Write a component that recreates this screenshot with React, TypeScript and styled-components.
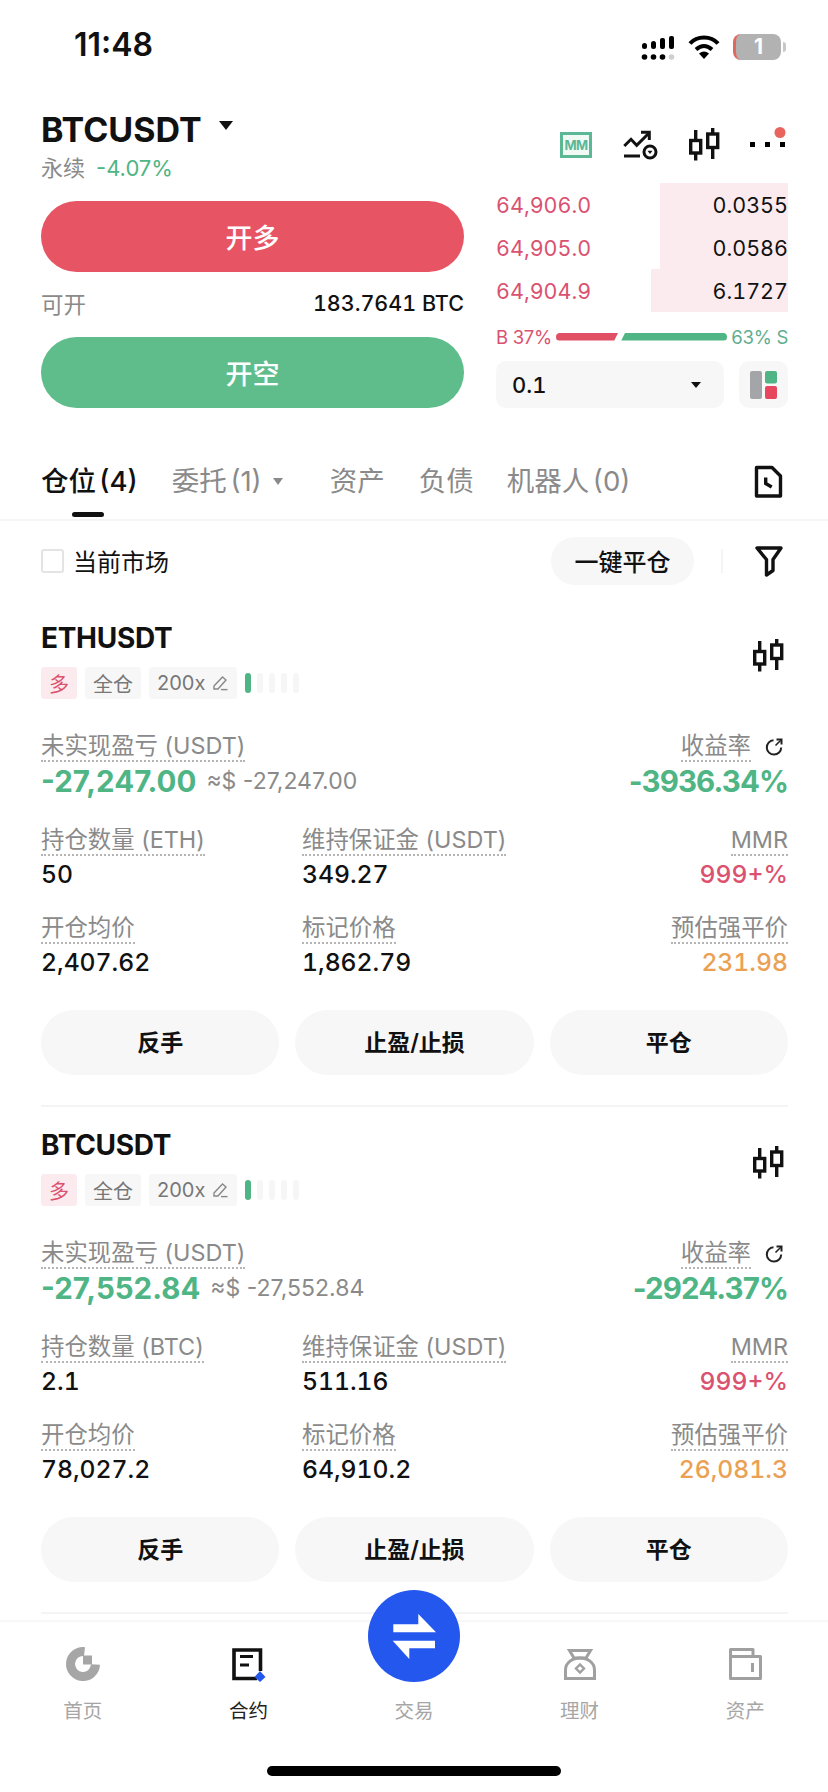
import React from 'react';
import styled, {createGlobalStyle} from 'styled-components';

const GlobalStyle = createGlobalStyle`
	html, body {
		margin: 0;
		padding: 0;
		background: #FFF;
	}
	* {
		box-sizing: border-box;
	}
	body {
		font-family: Inter, "Noto Sans CJK SC", sans-serif;
		color: #111;
	}
`;

const RED = '#DB5170';
const GREEN = '#4FB585';
const GRAY = '#8A8A8A';

const Page = styled.div`
	position: relative;
	width: 828px;
	height: 1792px;
	display: flex;
	flex-direction: column;
	overflow: hidden;
	background: #FFF;
`;

const StatusBar = styled.div`
	height: 109px;
	padding: 29px 47px 0 74px;
	display: flex;
	align-items: flex-start;
	justify-content: space-between;
`;

const Clock = styled.span`
	font-size: 32px;
	line-height: 32px;
	font-weight: 600;
`;

const StatusIcons = styled.div`
	display: flex;
	align-items: center;
	margin-top: 4px;
	gap: 13px;
`;

const Battery = styled.div`
	position: relative;
	width: 48px;
	height: 26px;
	border-radius: 8px;
	border-left: 3px solid #E0685E;
	background: #B2B2B2;
	color: #FFF;
	font-size: 21px;
	line-height: 26px;
	font-weight: 700;
	text-align: center;
	&::after {
		content: '';
		position: absolute;
		right: -5px;
		top: 8px;
		width: 3px;
		height: 10px;
		border-radius: 0 3px 3px 0;
		background: #C8C8C8;
	}
`;

const Header = styled.header`
	display: flex;
	gap: 32px;
	padding: 0 40px 0 41px;
`;

const LeftColumn = styled.div`
	width: 423px;
`;

const RightColumn = styled.div`
	width: 292px;
`;

const Symbol = styled.div`
	display: flex;
	align-items: center;
	height: 40px;
	font-size: 34px;
	font-weight: 700;
`;

const Caret = styled.i<{$size: number; $color?: string}>`
	display: inline-block;
	width: 0;
	height: 0;
	border-left: ${p => p.$size}px solid transparent;
	border-right: ${p => p.$size}px solid transparent;
	border-top: ${p => p.$size * 1.35}px solid ${p => p.$color || '#111'};
`;

const SymbolCaret = styled(Caret)`
	margin: 0 0 8px 17px;
`;

const SubLine = styled.div`
	margin-top: 4px;
	height: 30px;
	line-height: 30px;
	font-size: 22px;
	color: ${GRAY};
	> b {
		font-weight: 400;
		color: ${GREEN};
		margin-left: 11px;
	}
`;

const OpenButton = styled.button<{$color: string}>`
	display: block;
	width: 100%;
	height: 71px;
	border: 0;
	border-radius: 36px;
	padding: 0;
	background: ${p => p.$color};
	color: #FFF;
	font-family: inherit;
	font-size: 27px;
	font-weight: 500;
`;

const LongButton = styled(OpenButton)`
	margin-top: 18px;
`;

const Available = styled.div`
	height: 65px;
	padding-bottom: 3px;
	display: flex;
	align-items: center;
	justify-content: space-between;
	font-size: 21.5px;
	font-weight: 500;
	font-variant-numeric: tabular-nums;
	> span {
		font-size: 22.5px;
		font-weight: 400;
		color: ${GRAY};
	}
`;

const Toolbar = styled.div`
	height: 74px;
	padding-top: 18px;
	display: flex;
	align-items: flex-start;
	justify-content: flex-end;
	gap: 30px;
	> :last-child {
		margin-left: -2px;
	}
`;

const MMBadge = styled.div`
	width: 32px;
	height: 26px;
	margin-top: 5px;
	border: 3px solid #5CB795;
	background: #F1F9F5;
	color: #5CB795;
	font-size: 13px;
	line-height: 20px;
	font-weight: 700;
	text-align: center;
	letter-spacing: -0.6px;
`;

const BookRow = styled.div`
	position: relative;
	height: 43px;
	display: flex;
	align-items: center;
	justify-content: space-between;
	font-size: 21.5px;
	font-variant-numeric: tabular-nums;
	> span {
		color: ${RED};
	}
`;

const DepthBar = styled.div`
	position: absolute;
	top: 0;
	bottom: 0;
	right: 0;
	background: #FBEBEE;
`;

const Quantity = styled.div`
	position: relative;
	color: #111;
`;

const Ratio = styled.div`
	height: 49px;
	display: flex;
	align-items: center;
	font-size: 18.5px;
	letter-spacing: -0.3px;
`;

const RatioLabel = styled.span<{$color: string}>`
	color: ${p => p.$color};
	white-space: nowrap;
`;

const RatioTrack = styled.div`
	flex: 1;
	display: flex;
	gap: 3px;
	margin: 0 4px;
`;

const RatioBuy = styled.div`
	height: 8px;
	border-radius: 4px 0 0 4px;
	background: #E04F63;
	clip-path: polygon(0 0, 100% 0, calc(100% - 4px) 100%, 0 100%);
`;

const RatioSell = styled.div`
	height: 8px;
	border-radius: 0 4px 4px 0;
	background: #4FB585;
	clip-path: polygon(4px 0, 100% 0, 100% 100%, 0 100%);
`;

const SizeRow = styled.div`
	display: flex;
	justify-content: space-between;
`;

const SizeSelect = styled.div`
	width: 228px;
	height: 47px;
	padding: 0 23px 0 16px;
	border-radius: 10px;
	background: #F7F7F7;
	display: flex;
	align-items: center;
	justify-content: space-between;
	font-size: 22px;
	font-weight: 500;
	font-variant-numeric: tabular-nums;
`;

const LayoutButton = styled.div`
	width: 49px;
	height: 47px;
	border-radius: 10px;
	background: #F7F7F7;
	display: flex;
	align-items: center;
	justify-content: center;
`;

const Tabs = styled.nav`
	position: relative;
	margin-top: 55px;
	height: 58px;
	padding: 0 45px 0 41px;
	display: flex;
	align-items: flex-start;
	border-bottom: 2px solid #F5F5F5;
`;

const Tab = styled.div<{$active?: boolean; $gap: number}>`
	position: relative;
	height: 36px;
	margin-right: ${p => p.$gap}px;
	display: flex;
	align-items: center;
	font-size: 27.5px;
	line-height: 36px;
	word-spacing: -4px;
	font-weight: ${p => p.$active ? 500 : 400};
	color: ${p => p.$active ? '#111' : GRAY};
	${p => p.$active && `
		&::after {
			content: '';
			position: absolute;
			left: 31px;
			top: 49px;
			width: 32px;
			height: 5px;
			border-radius: 3px;
			background: #111;
		}
	`}
`;

const TabCaret = styled(Caret)`
	margin-left: 11px;
`;

const TabEnd = styled.div`
	margin-left: auto;
	margin-top: 1px;
`;

const FilterRow = styled.div`
	padding: 16px 44px 0 41px;
	display: flex;
	align-items: center;
`;

const CheckBox = styled.div`
	width: 23px;
	height: 24px;
	border: 2px solid #E4E4E4;
	border-radius: 3px;
`;

const CheckLabel = styled.span`
	margin: 0 0 2px 9px;
	font-size: 24px;
`;

const ClosePill = styled.div`
	margin-left: auto;
	width: 143px;
	height: 48px;
	padding-bottom: 2px;
	border-radius: 24px;
	background: #F7F7F7;
	display: flex;
	align-items: center;
	justify-content: center;
	font-size: 24px;
	font-weight: 500;
`;

const FilterSplit = styled.div`
	width: 2px;
	height: 24px;
	margin: 0 31px 0 27px;
	background: #F4F4F4;
`;

const Positions = styled.main`
	flex: 1;
	min-height: 0;
	overflow: hidden;
	padding-top: 15px;
`;

const Card = styled.section`
	margin: 0 40px 0 41px;
	padding: 18px 0 30px;
	border-bottom: 2px solid #F4F4F4;
`;

const CardHead = styled.div`
	display: flex;
	justify-content: space-between;
	align-items: flex-start;
	> svg {
		margin: 20px 4px 0 0;
	}
`;

const CardTitle = styled.h2`
	margin: 0 0 9px;
	height: 40px;
	line-height: 40px;
	font-size: 28px;
	font-weight: 700;
	letter-spacing: -0.3px;
`;

const TagRow = styled.div`
	display: flex;
	align-items: center;
	gap: 8px;
`;

const Tag = styled.span<{$long?: boolean}>`
	height: 32px;
	padding: 0 8px;
	border-radius: 3px;
	display: inline-flex;
	align-items: center;
	gap: 7px;
	font-size: 20px;
	background: ${p => p.$long ? '#FBEBEE' : '#F7F7F7'};
	color: ${p => p.$long ? RED : '#777'};
`;

const Leverage = styled.div`
	display: flex;
	gap: 6px;
`;

const LeverageBar = styled.i<{$on?: boolean}>`
	width: 6px;
	height: 20px;
	border-radius: 3px;
	background: ${p => p.$on ? GREEN : '#F6F6F6'};
`;

const Metrics = styled.div`
	margin-top: 33px;
	display: flex;
	flex-direction: column;
	gap: 24px;
`;

const PnlRow = styled.div`
	height: 70px;
	display: flex;
	justify-content: space-between;
`;

const MetricRow = styled.div`
	display: grid;
	grid-template-columns: 261px 1fr auto;
`;

const Metric = styled.div<{$right?: boolean}>`
	display: flex;
	flex-direction: column;
	align-items: ${p => p.$right ? 'flex-end' : 'flex-start'};
`;

const LabelLine = styled.div`
	display: flex;
	align-items: center;
	gap: 13px;
	padding-right: 4px;
`;

const Label = styled.span`
	height: 30px;
	line-height: 28px;
	font-size: 23.4px;
	color: ${GRAY};
	border-bottom: 2px dotted #B5B5B5;
	white-space: nowrap;
`;

const Value = styled.div<{$color?: string}>`
	margin-top: 2px;
	height: 32px;
	line-height: 32px;
	font-size: 24.7px;
	font-weight: 500;
	font-variant-numeric: tabular-nums;
	color: ${p => p.$color || '#111'};
`;

const BigLine = styled.div`
	margin-top: 2px;
	height: 34px;
	display: flex;
	align-items: center;
	gap: 10px;
`;

const BigValue = styled.span<{$color: string; $tight?: boolean}>`
	font-size: 29.5px;
	line-height: 34px;
	font-weight: 700;
	letter-spacing: ${p => p.$tight ? -0.9 : 0}px;
	color: ${p => p.$color};
`;

const Approx = styled.span`
	font-size: 23px;
	color: ${GRAY};
`;

const Actions = styled.div`
	margin-top: 32px;
	display: grid;
	grid-template-columns: repeat(3, 1fr);
	gap: 16px;
`;

const ActionButton = styled.button`
	height: 65px;
	border: 0;
	border-radius: 33px;
	padding: 0 0 3px;
	background: #F7F7F7;
	color: #111;
	font-family: inherit;
	font-size: 23px;
	font-weight: 600;
`;

const TabBar = styled.footer`
	position: relative;
	height: 172px;
	border-top: 2px solid #F8F8F8;
	background: #FFF;
	display: grid;
	grid-template-columns: repeat(5, 1fr);
`;

const BarItem = styled.div<{$active?: boolean}>`
	position: relative;
	padding-top: 24px;
	display: flex;
	flex-direction: column;
	align-items: center;
	gap: 14px;
	font-size: 19.5px;
	line-height: 30px;
	color: ${p => p.$active ? '#222' : '#A6A6A6'};
	> svg {
		display: block;
	}
`;

const IconSlot = styled.div`
	height: 36px;
`;

const TradeButton = styled.div`
	position: absolute;
	top: -32px;
	left: 50%;
	width: 92px;
	height: 92px;
	margin-left: -46px;
	border-radius: 50%;
	background: #2457EE;
`;

const HomeBar = styled.div`
	position: absolute;
	left: 267px;
	bottom: 16px;
	width: 294px;
	height: 10px;
	border-radius: 5px;
	background: #000;
`;

const SignalIcon = () => (
	<svg width="36" height="28" viewBox="0 0 36 28">
		<rect x="3" y="10" width="5" height="6" rx="2.5"/>
		<rect x="12" y="8" width="5" height="8" rx="2.5"/>
		<rect x="21" y="5" width="5" height="11" rx="2"/>
		<rect x="30" y="3" width="5" height="13" rx="2"/>
		<circle cx="5.5" cy="24" r="2.8"/>
		<circle cx="14.5" cy="24" r="2.8"/>
		<circle cx="23.5" cy="24" r="2.8"/>
		<circle cx="32.5" cy="24" r="2.8" fill="#CFCFCF"/>
	</svg>
);

const WifiIcon = () => (
	<svg width="32" height="26" viewBox="0 0 32 26">
		<path d="M2 9.5C9 1.5 23 1.5 30 9.5" fill="none" stroke="#000" strokeWidth="4"/>
		<path d="M8 15.5Q16 8.5 24 15.5" fill="none" stroke="#000" strokeWidth="4"/>
		<path d="M11 19.5Q16 15.5 21 19.5L16 25Z"/>
	</svg>
);

const ChartIcon = () => (
	<svg width="36" height="34" viewBox="0 0 36 34" fill="none" stroke="#111" strokeWidth="3">
		<path d="M2.3 19L9 12.3L14.7 18.3L26.3 6.7"/>
		<path d="M19 5.2H27.3V13"/>
		<path d="M2 29H18"/>
		<circle cx="28" cy="25" r="6"/>
		<path d="M25.5 23.8H30.5L28 27Z" fill="#111" stroke="none"/>
	</svg>
);

const CandleIcon = () => (
	<svg width="32" height="34" viewBox="0 0 32 34" fill="none" stroke="#111" strokeWidth="3.4">
		<path d="M7.7 3V33.5"/>
		<rect x="2.7" y="13.5" width="10" height="12.5" fill="#FFF"/>
		<path d="M24.7 1V32"/>
		<rect x="19.7" y="7" width="10" height="13.5" fill="#FFF"/>
	</svg>
);

const MoreIcon = () => (
	<svg width="40" height="34" viewBox="2 0 40 34">
		<rect x="4" y="15" width="5" height="5"/>
		<rect x="19" y="15" width="5" height="5"/>
		<rect x="34" y="15" width="5" height="5"/>
		<circle cx="34" cy="5.5" r="5.5" fill="#E9645F"/>
	</svg>
);

const LayoutIcon = () => (
	<svg width="27" height="28" viewBox="0 0 27 28">
		<rect width="12" height="28" rx="2" fill="#A3A5A9"/>
		<rect x="15" width="12" height="12.5" rx="2" fill="#4FB585"/>
		<rect x="15" y="15" width="12" height="13" rx="2" fill="#E6465E"/>
	</svg>
);

const HistoryIcon = () => (
	<svg width="30" height="34" viewBox="0 0 30 34" fill="none" stroke="#111" strokeWidth="3.4">
		<path d="M3.5 3.5H19L27.5 12V32H3.5Z" strokeLinejoin="round"/>
		<path d="M12.7 13.5V19.5L18.7 23"/>
	</svg>
);

const FilterIcon = () => (
	<svg width="30" height="32" viewBox="0 0 30 32" fill="none" stroke="#111" strokeWidth="3.4" strokeLinejoin="round">
		<path d="M3 3H27L19 14.5V25.5L12.5 30V14.5Z"/>
	</svg>
);

const PenIcon = () => (
	<svg width="17" height="16" viewBox="0 0 17 16" fill="none" stroke="#888" strokeWidth="1.4">
		<path d="M2 11L10.5 2L14 5L6 14H2Z"/>
		<path d="M9 14.6H15.5"/>
	</svg>
);

const RefreshIcon = () => (
	<svg width="20" height="20" viewBox="0 0 20 20" fill="none" stroke="#222" strokeWidth="2">
		<path d="M9.5 3.2A7.2 7.2 0 1 0 17.2 10.5"/>
		<path d="M12.5 2.6H17.5V7.6"/>
		<path d="M17.3 2.8L11.5 8.5" strokeWidth="1.6"/>
	</svg>
);

const HomeIcon = () => (
	<svg width="36" height="36" viewBox="0 0 36 36" fill="none">
		<path d="M19.5 5.6A12.5 12.5 0 1 0 30.5 18.5" stroke="#A6A6A6" strokeWidth="9"/>
		<rect x="18" y="9.5" width="9" height="9" fill="#A6A6A6"/>
	</svg>
);

const ContractIcon = () => (
	<svg width="36" height="36" viewBox="0 0 36 36" fill="none">
		<path d="M27 32.5H4V4H30.5V25" stroke="#111" strokeWidth="3.6"/>
		<path d="M10 10.5H23M10 19H19" stroke="#111" strokeWidth="3.2"/>
		<path d="M30 25L35.5 31L30 36L24.5 31Z" fill="#2457EE"/>
	</svg>
);

const FinanceIcon = () => (
	<svg width="36" height="36" viewBox="0 0 36 36" fill="none" stroke="#A0A0A0" strokeWidth="3">
		<path d="M7.5 4.5H28.5L24 12H12Z"/>
		<path d="M3.5 32.5V24C3.5 17 10 12 18 12S32.5 17 32.5 24V32.5Z"/>
		<path d="M18 18.5L22 22.5L18 26.5L14 22.5Z" strokeWidth="2.4"/>
	</svg>
);

const AssetIcon = () => (
	<svg width="36" height="36" viewBox="0 0 36 36" fill="none" stroke="#A0A0A0" strokeWidth="3">
		<path d="M3.5 3.5H26V10.5H33.5V32.5H3.5Z" strokeLinejoin="round"/>
		<path d="M3.5 10.5H26"/>
		<path d="M25.5 17V26"/>
	</svg>
);

const SwapIcon = () => (
	<svg width="92" height="92" viewBox="0 0 92 92" fill="#FFF">
		<path d="M25.3 34.3H50.3V24L68 42.3H25.3Z"/>
		<path d="M67 50.7H24.7L41.3 69V58.3H67Z"/>
	</svg>
);

type Position = {
	symbol: string;
	base: string;
	pnl: string;
	approx: string;
	roi: string;
	size: string;
	margin: string;
	entry: string;
	mark: string;
	liq: string;
};

const positions: Position[] = [
	{symbol: 'ETHUSDT', base: 'ETH', pnl: '-27,247.00', approx: '≈$ -27,247.00', roi: '-3936.34%', size: '50', margin: '349.27', entry: '2,407.62', mark: '1,862.79', liq: '231.98'},
	{symbol: 'BTCUSDT', base: 'BTC', pnl: '-27,552.84', approx: '≈$ -27,552.84', roi: '-2924.37%', size: '2.1', margin: '511.16', entry: '78,027.2', mark: '64,910.2', liq: '26,081.3'},
];

const book = [
	{price: '64,906.0', qty: '0.0355', depth: 128},
	{price: '64,905.0', qty: '0.0586', depth: 128},
	{price: '64,904.9', qty: '6.1727', depth: 137},
];

const barItems = [
	{label: '首页', icon: <HomeIcon/>},
	{label: '合约', icon: <ContractIcon/>, active: true},
	{label: '交易'},
	{label: '理财', icon: <FinanceIcon/>},
	{label: '资产', icon: <AssetIcon/>},
];

const PositionCard = ({item}: {item: Position}) => (
	<Card>
		<CardHead>
			<div>
				<CardTitle>{item.symbol}</CardTitle>
				<TagRow>
					<Tag $long>多</Tag>
					<Tag>全仓</Tag>
					<Tag>200x <PenIcon/></Tag>
					<Leverage>
						<LeverageBar $on/>
						<LeverageBar/>
						<LeverageBar/>
						<LeverageBar/>
						<LeverageBar/>
					</Leverage>
				</TagRow>
			</div>
			<CandleIcon/>
		</CardHead>
		<Metrics>
			<PnlRow>
				<Metric>
					<Label>未实现盈亏 (USDT)</Label>
					<BigLine>
						<BigValue $color={GREEN}>{item.pnl}</BigValue>
						<Approx>{item.approx}</Approx>
					</BigLine>
				</Metric>
				<Metric $right>
					<LabelLine>
						<Label>收益率</Label>
						<RefreshIcon/>
					</LabelLine>
					<BigLine>
						<BigValue $color={GREEN} $tight>{item.roi}</BigValue>
					</BigLine>
				</Metric>
			</PnlRow>
			<MetricRow>
				<Metric>
					<Label>持仓数量 ({item.base})</Label>
					<Value>{item.size}</Value>
				</Metric>
				<Metric>
					<Label>维持保证金 (USDT)</Label>
					<Value>{item.margin}</Value>
				</Metric>
				<Metric $right>
					<Label>MMR</Label>
					<Value $color={RED}>999+%</Value>
				</Metric>
			</MetricRow>
			<MetricRow>
				<Metric>
					<Label>开仓均价</Label>
					<Value>{item.entry}</Value>
				</Metric>
				<Metric>
					<Label>标记价格</Label>
					<Value>{item.mark}</Value>
				</Metric>
				<Metric $right>
					<Label>预估强平价</Label>
					<Value $color="#EBA154">{item.liq}</Value>
				</Metric>
			</MetricRow>
		</Metrics>
		<Actions>
			<ActionButton>反手</ActionButton>
			<ActionButton>止盈/止损</ActionButton>
			<ActionButton>平仓</ActionButton>
		</Actions>
	</Card>
);

export default function App() {
	return (
		<Page>
			<GlobalStyle/>
			<StatusBar>
				<Clock>11:48</Clock>
				<StatusIcons>
					<SignalIcon/>
					<WifiIcon/>
					<Battery>1</Battery>
				</StatusIcons>
			</StatusBar>
			<Header>
				<LeftColumn>
					<Symbol>BTCUSDT<SymbolCaret $size={7}/></Symbol>
					<SubLine>永续<b>-4.07%</b></SubLine>
					<LongButton $color="#E75565">开多</LongButton>
					<Available><span>可开</span>183.7641 BTC</Available>
					<OpenButton $color="#5FBD8C">开空</OpenButton>
				</LeftColumn>
				<RightColumn>
					<Toolbar>
						<MMBadge>MM</MMBadge>
						<ChartIcon/>
						<CandleIcon/>
						<MoreIcon/>
					</Toolbar>
					{book.map(row =>
						<BookRow key={row.price}>
							<DepthBar style={{width: row.depth}}/>
							<span>{row.price}</span>
							<Quantity>{row.qty}</Quantity>
						</BookRow>)}
					<Ratio>
						<RatioLabel $color={RED}>B 37%</RatioLabel>
						<RatioTrack>
							<RatioBuy style={{flex: 37}}/>
							<RatioSell style={{flex: 63}}/>
						</RatioTrack>
						<RatioLabel $color="#5FAE90">63% S</RatioLabel>
					</Ratio>
					<SizeRow>
						<SizeSelect>0.1<Caret $size={5}/></SizeSelect>
						<LayoutButton><LayoutIcon/></LayoutButton>
					</SizeRow>
				</RightColumn>
			</Header>
			<Tabs>
				<Tab $active $gap={34}>仓位 (4)</Tab>
				<Tab $gap={47}>委托 (1)<TabCaret $size={5.5} $color={GRAY}/></Tab>
				<Tab $gap={34}>资产</Tab>
				<Tab $gap={33}>负债</Tab>
				<Tab $gap={0}>机器人 (0)</Tab>
				<TabEnd><HistoryIcon/></TabEnd>
			</Tabs>
			<FilterRow>
				<CheckBox/>
				<CheckLabel>当前市场</CheckLabel>
				<ClosePill>一键平仓</ClosePill>
				<FilterSplit/>
				<FilterIcon/>
			</FilterRow>
			<Positions>
				{positions.map(item => <PositionCard key={item.symbol} item={item}/>)}
			</Positions>
			<TabBar>
				{barItems.map(item =>
					<BarItem key={item.label} $active={item.active}>
						{item.icon
							? item.icon
							: <IconSlot><TradeButton><SwapIcon/></TradeButton></IconSlot>}
						<span>{item.label}</span>
					</BarItem>)}
				<HomeBar/>
			</TabBar>
		</Page>
	);
}
